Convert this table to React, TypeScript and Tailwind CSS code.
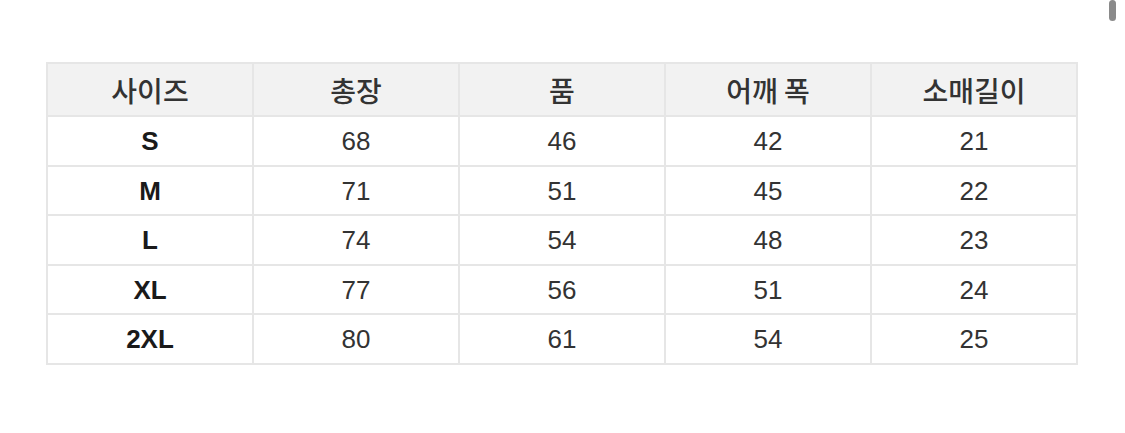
const headers = ['사이즈', '총장', '품', '어깨 폭', '소매길이'];

const rows = [
  ['S', '68', '46', '42', '21'],
  ['M', '71', '51', '45', '22'],
  ['L', '74', '54', '48', '23'],
  ['XL', '77', '56', '51', '24'],
  ['2XL', '80', '61', '54', '25'],
];

export default function App() {
  return (
    <div
      className="relative w-[1125px] h-[433px] bg-white"
      style={{ fontFamily: '"Liberation Sans", Arial, "Noto Sans CJK KR", sans-serif' }}
    >
      {/* scrollbar thumb */}
      <div className="absolute left-[1109px] top-0 w-[7px] h-[21px] rounded-full bg-[#8a8a8a]" />

      <div className="pt-[62px] pl-[46px]">
        <table className="border-collapse w-[1032px] table-fixed text-[#2a2a2a]">
          <thead>
            <tr className="bg-[#f2f2f2] h-[53px]">
              {headers.map((h) => (
                <th
                  key={h}
                  className="border-2 border-[#e6e6e6] text-[28px] leading-none font-medium text-[#333]"
                  style={{ fontFamily: '"Noto Sans CJK KR", sans-serif' }}
                >
                  {h}
                </th>
              ))}
            </tr>
          </thead>
          <tbody>
            {rows.map((r) => (
              <tr key={r[0]} className="h-[49.5px]">
                {r.map((c, i) => (
                  <td
                    key={i}
                    className={
                      'border-2 border-[#e6e6e6] text-center text-[26px] pt-[2px] ' +
                      (i === 0 ? 'font-bold text-[#1a1a1a]' : 'text-[#333]')
                    }
                  >
                    {c}
                  </td>
                ))}
              </tr>
            ))}
          </tbody>
        </table>
      </div>
    </div>
  );
}
